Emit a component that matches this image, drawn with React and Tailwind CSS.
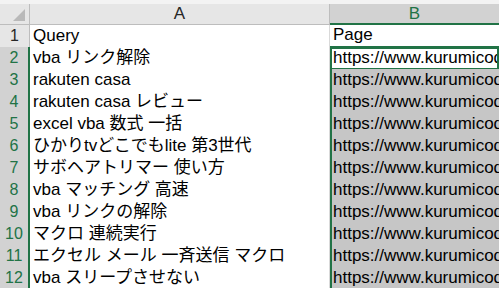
const queries = [
  'Query',
  'vba リンク解除',
  'rakuten casa',
  'rakuten casa レビュー',
  'excel vba 数式 一括',
  'ひかりtvどこでもlite 第3世代',
  'サボヘアトリマー 使い方',
  'vba マッチング 高速',
  'vba リンクの解除',
  'マクロ 連続実行',
  'エクセル メール 一斉送信 マクロ',
  'vba スリープさせない',
]

const font = { fontFamily: '"Liberation Sans", "Noto Sans CJK JP", sans-serif' }

function HeaderRow() {
  return (
    <div className="grid grid-cols-[30px_300px_1fr] h-[21px] bg-[#e6e6e6]">
      <div className="relative border-r border-b border-[#bdbdbd]">
        {/* select-all triangle */}
        <svg className="absolute right-[4px] bottom-[3px]" width="12" height="12" viewBox="0 0 12 12">
          <polygon points="12,0 12,12 0,12" fill="#b9b9b9" />
        </svg>
      </div>
      <div className="border-r border-b border-[#bdbdbd] text-center text-[17px] leading-[20px] text-[#262626]">
        A
      </div>
      <div className="bg-[#d2d2d2] border-b-2 border-[#217346] text-center text-[17px] leading-[19px] text-[#217346]">
        B
      </div>
    </div>
  )
}

function Row({ n, text }) {
  const selected = n > 1
  const active = n === 2
  return (
    <div className="grid grid-cols-[30px_300px_1fr] h-[22px]">
      <div
        className={
          selected
            ? 'bg-[#d2d2d2] border-b border-[#bdbdbd] border-r-2 border-r-[#217346] text-center text-[16px] leading-[22px] text-[#217346]'
            : 'bg-[#e6e6e6] border-b border-r border-[#bdbdbd] text-center text-[16px] leading-[22px] text-[#262626]'
        }
      >
        {n}
      </div>
      <div className="bg-white border-b border-r border-[#d9d9d9] pl-[3px] text-[17px] leading-[22px] text-black whitespace-nowrap overflow-hidden">
        {text}
      </div>
      <div
        className={
          active
            ? 'bg-white border-2 border-[#217346] pl-[1px] text-[17px] leading-[18px] text-black whitespace-nowrap overflow-hidden'
            : selected
            ? 'bg-[#c6c6c6] border-l-2 border-l-[#217346] border-b border-b-[#acacac] pl-[1px] text-[17px] leading-[21px] text-black whitespace-nowrap overflow-hidden'
            : 'bg-white border-b-2 border-[#217346] pl-[3px] text-[17px] leading-[20px] text-black whitespace-nowrap overflow-hidden'
        }
      >
        {n === 1 ? 'Page' : 'https://www.kurumicode.com/'}
      </div>
    </div>
  )
}

export default function App() {
  return (
    <div className="w-[499px] h-[288px] overflow-hidden bg-white" style={font}>
      <div className="h-[4px] bg-[#f3f3f3]" />
      <HeaderRow />
      {queries.map((q, i) => (
        <Row key={i} n={i + 1} text={q} />
      ))}
    </div>
  )
}
